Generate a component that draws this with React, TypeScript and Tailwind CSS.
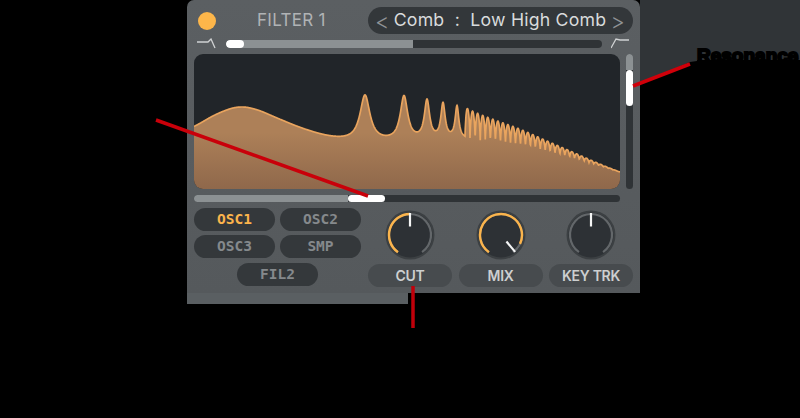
const W = 426;
const H = 135;

// lower edge of the response, in display coords
const floorPts: [number, number][] = [
  [-40, 90], [0, 73], [22, 60], [44, 52], [62, 55], [80, 63], [106, 74], [130, 82], [150, 86],
  [175, 88], [240, 87], [270, 85], [326, 92], [376, 104], [426, 118], [460, 128],
];

function buildCurve() {
  const step = 0.25;
  const raw: number[] = [];
  const lerp = (x: number) => {
    for (let i = 1; i < floorPts.length; i++) {
      const [x0, y0] = floorPts[i - 1];
      const [x1, y1] = floorPts[i];
      if (x <= x1) return y0 + ((y1 - y0) * (x - x0)) / (x1 - x0);
    }
    return 128;
  };
  const n = W / step;
  const blur = 40;
  for (let i = -blur; i <= n + blur; i++) raw.push(lerp(i * step));
  const peaks = [
    [171, 46, 6], [210, 44, 4.5], [233, 39, 3.2], [249, 35, 2.6], [263, 32, 2.2],
  ];
  // comb teeth tops
  const teeth: number[] = [];
  let t = 273.5;
  let gap = 5.1;
  while (t < W) {
    teeth.push(t);
    t += gap;
    gap = Math.max(4.3, gap - 0.012);
  }
  const pts: string[] = [];
  for (let i = 0; i <= n; i++) {
    const x = i * step;
    let sum = 0;
    for (let k = -blur; k <= blur; k++) sum += raw[i + blur + k];
    let y = sum / (2 * blur + 1);
    for (const [px, h, w] of peaks) y -= h / (1 + ((x - px) / w) ** 2);
    if (x > 268) {
      const env = 30 * Math.max(0, (W - x) / (W - 268)) ** 1.25;
      let near = 999;
      for (const tx of teeth) near = Math.min(near, Math.abs(x - tx));
      const fall = Math.min(1, (x - 268) / 4);
      y -= env * fall * Math.max(0, Math.cos((near / 2.5) * (Math.PI / 2))) ** 0.6;
    }
    pts.push(`${x.toFixed(2)},${y.toFixed(2)}`);
  }
  return pts;
}

function ResponseGraph() {
  const pts = buildCurve();
  const line = 'M' + pts.join('L');
  return (
    <svg width={W} height={H} viewBox={`0 0 ${W} ${H}`} className="block">
      <defs>
        <linearGradient id="fillGrad" x1="0" y1="0" x2="0" y2="1">
          <stop offset="0.4" stopColor="#ad8058" />
          <stop offset="1" stopColor="#8f684b" />
        </linearGradient>
      </defs>
      <path d={`${line}L${W},${H}L0,${H}Z`} fill="url(#fillGrad)" />
      <path d={line} fill="none" stroke="#e9a45e" strokeWidth="1.7" />
    </svg>
  );
}

function arc(r: number, from: number, to: number) {
  const p = (a: number) => {
    const rad = (a * Math.PI) / 180;
    return `${(25 + r * Math.sin(rad)).toFixed(2)} ${(25 - r * Math.cos(rad)).toFixed(2)}`;
  };
  return `M${p(from)}A${r} ${r} 0 ${to - from > 180 ? 1 : 0} 1 ${p(to)}`;
}

function Knob({ value, pointer }: { value?: number; pointer: number }) {
  const rad = (pointer * Math.PI) / 180;
  return (
    <svg width="50" height="50" viewBox="0 0 50 50" className="block">
      <circle cx="25" cy="25" r="24.5" fill="#3c4043" />
      <circle cx="25" cy="25" r="22.5" fill="#2d3135" />
      <path d={arc(21, -145, 145)} fill="none" stroke="#63676a" strokeWidth="2.2" />
      {value !== undefined && <path d={arc(21, -145, value)} fill="none" stroke="#fbb44c" strokeWidth="2.4" />}
      <line
        x1={25 + 8.5 * Math.sin(rad)}
        y1={25 - 8.5 * Math.cos(rad)}
        x2={25 + 22 * Math.sin(rad)}
        y2={25 - 22 * Math.cos(rad)}
        stroke="#f4f5f5"
        strokeWidth="2.2"
      />
    </svg>
  );
}

function SourceButton({ label, active, className }: { label: string; active?: boolean; className?: string }) {
  return (
    <div
      className={`h-[23px] w-[81px] rounded-full bg-[#34383b] flex items-center justify-center font-['DejaVu_Sans_Mono',monospace] font-bold text-[14.5px] ${active ? 'text-[#fbb44c]' : 'text-[#85898c]'} ${className ?? ''}`}
    >
      {label}
    </div>
  );
}

const knobs = [
  { label: 'CUT', value: 0, pointer: 0 },
  { label: 'MIX', value: 115, pointer: 140 },
  { label: 'KEY TRK', pointer: 0 },
];

export default function App() {
  return (
    <div className="relative w-[800px] h-[418px] bg-black overflow-hidden font-['Inter',sans-serif]">
      <div className="ml-[187px] w-[453px] h-[293px] pt-[7px] rounded-t-[7px] bg-gradient-to-b from-[#5b5f62] to-[#55595c]">
        <div className="flex items-center h-[27px] pl-[11px] pr-[7px]">
          <div className="w-[18px] h-[18px] rounded-full bg-[#fdb64a]" />
          <div className="ml-[41px] text-[17px] tracking-[0.3px] text-[#b0b3b5] whitespace-nowrap">FILTER 1</div>
          <div className="ml-auto w-[265px] h-[27px] rounded-full bg-[#33373a] flex items-center justify-between pl-[7px] pr-[8px]">
            <span className="text-[22px] leading-[24px] font-light text-[#8f9396]">&lt;</span>
            <span className="text-[17.7px] tracking-[0.2px] text-[#d9dbdc] whitespace-pre">Comb  :  Low High Comb</span>
            <span className="text-[22px] leading-[24px] font-light text-[#8f9396]">&gt;</span>
          </div>
        </div>

        <div className="flex items-center h-[13px] mt-[3px] pl-[10px] pr-[10px]">
          <svg width="19" height="11" viewBox="0 0 19 11" fill="none" stroke="#d0d2d3" strokeWidth="1.3">
            <path d="M0 4H11L14 1L18 10" />
          </svg>
          <div className="ml-[10px] w-[376px] h-[8px] rounded-full bg-[#2f3336] overflow-hidden">
            <div className="relative w-[187px] h-full bg-[#8c9193]">
              <div className="absolute left-0 top-0 h-full w-[18px] rounded-full bg-white" />
            </div>
          </div>
          <svg className="ml-[9px]" width="19" height="11" viewBox="0 0 19 11" fill="none" stroke="#d0d2d3" strokeWidth="1.3">
            <path d="M0 10L5 1L9 2H18" />
          </svg>
        </div>

        <div className="flex mt-[4px] pl-[7px]">
          <div className="w-[426px] h-[135px] rounded-[9px] bg-[#212529] overflow-hidden">
            <ResponseGraph />
          </div>
          <div className="ml-[6px] w-[7px] h-[135px] rounded-full bg-[#2f3336] overflow-hidden">
            <div className="h-[16px] bg-[#8c9193]" />
            <div className="h-[36px] rounded-full bg-white" />
          </div>
        </div>

        <div className="flex ml-[7px] mt-[6px] w-[426px] h-[7px] rounded-full bg-[#2f3336] overflow-hidden">
          <div className="w-[154px] bg-[#8c9193]" />
          <div className="w-[37px] rounded-full bg-white" />
        </div>

        <div className="flex mt-[6px] pl-[7px] pr-[7px]">
          <div className="grid grid-cols-2 gap-x-[5px] gap-y-[4px] w-[167px] content-start">
            <SourceButton label="OSC1" active />
            <SourceButton label="OSC2" />
            <SourceButton label="OSC3" />
            <SourceButton label="SMP" />
            <SourceButton label="FIL2" className="col-span-2 justify-self-center mt-[1px]" />
          </div>
          <div className="ml-auto w-[265px] grid grid-cols-3 gap-x-[6.5px]">
            {knobs.map((k) => (
              <div key={k.label} className="flex flex-col items-center pt-[2px]">
                <Knob value={k.value} pointer={k.pointer} />
                <div className="mt-[4px] w-full h-[23px] rounded-full bg-[#474b4e] flex items-center justify-center text-[14px] font-semibold tracking-[-0.3px] text-[#cdcfd0] whitespace-nowrap">
                  {k.label}
                </div>
              </div>
            ))}
          </div>
        </div>
      </div>
      <div className="ml-[187px] w-[221px] h-[11px] bg-[#5a5f62]" />

      {/* annotation layer */}
      <svg className="absolute left-0 top-0" width="800" height="418" viewBox="0 0 800 418">
        <polygon points="640,0 800,0 800,60 697,60 697,61 690,62 640,84" fill="#303437" />
        <line x1="156" y1="120" x2="368" y2="196" stroke="#c9000a" strokeWidth="3.5" />
        <line x1="633" y1="86" x2="690" y2="64" stroke="#d0000a" strokeWidth="3.5" />
        <line x1="413" y1="286" x2="413" y2="328" stroke="#c0000a" strokeWidth="3.5" />
      </svg>
      <div className="absolute left-[697px] top-[44px] text-[19px] leading-[24px] font-bold text-black whitespace-nowrap font-['Liberation_Sans',sans-serif] [-webkit-text-stroke:2px_black]">
        Resonance
      </div>
    </div>
  );
}
